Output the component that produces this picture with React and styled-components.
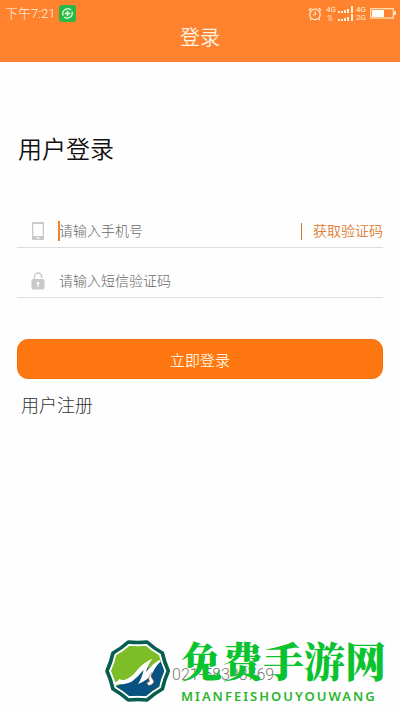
import React from "react";
import styled, { createGlobalStyle } from "styled-components";

const GlobalStyle = createGlobalStyle`
  *, *::before, *::after { box-sizing: border-box; }
  body {
    margin: 0;
    background: #fefefe;
    font-family: Roboto, "Noto Sans CJK SC", sans-serif;
  }
  button, input { font: inherit; }
`;

const Page = styled.div`
  min-height: 100vh;
  display: flex;
  flex-direction: column;
  background: #fefefe;
`;

const Header = styled.header`
  background: #ff822e;
  color: #fff4e4;
  height: 62px;
`;

const StatusBar = styled.div`
  height: 26px;
  padding: 1px 4px 0 5px;
  display: flex;
  align-items: center;
  justify-content: space-between;
`;

const StatusGroup = styled.div`
  display: flex;
  align-items: center;
  gap: ${(p) => p.$gap}px;
`;

const Clock = styled.span`
  font-size: 13px;
  line-height: 20px;
  font-weight: 300;
`;

const PageTitle = styled.h1`
  margin: 0;
  font-size: 20px;
  line-height: 24px;
  font-weight: 350;
  text-align: center;
`;

const LoginForm = styled.form`
  padding: 72px 17px 0;
`;

const Heading = styled.h2`
  margin: 0 0 48px;
  padding-left: 1px;
  font-size: 24px;
  line-height: 32px;
  font-weight: 350;
  color: #111;
`;

const Field = styled.div`
  height: ${(p) => p.$height}px;
  display: flex;
  align-items: flex-end;
  padding-bottom: 2px;
  border-bottom: 1px solid #dedede;
`;

const FieldIcon = styled.label`
  width: 42px;
  height: 28px;
  flex: none;
  display: flex;
  align-items: center;
  justify-content: center;
`;

const Caret = styled.span`
  width: 2px;
  height: 20px;
  margin: 0 -1px 4px;
  background: #ef8429;
`;

const TextInput = styled.input`
  flex: 1;
  min-width: 0;
  height: 28px;
  padding: 0;
  border: 0;
  outline: 0;
  background: transparent;
  color: #333;
  font-size: 14px;
  font-weight: 300;
  &::placeholder { color: #666; opacity: 1; }
`;

const CodeButton = styled.button`
  display: flex;
  align-items: center;
  gap: 11px;
  height: 28px;
  padding: 0;
  border: 0;
  background: none;
  color: #e17d31;
  font-size: 14px;
  line-height: 20px;
  font-weight: 350;
  &::before {
    content: "";
    width: 1px;
    height: 17px;
    background: #d96f2b;
  }
`;

const SubmitButton = styled.button`
  width: 100%;
  height: 40px;
  margin-top: 41px;
  padding: 0;
  border: 1px solid #f0700f;
  border-radius: 11px;
  background: #ff7711;
  color: #fff1df;
  font-size: 15px;
  font-weight: 350;
`;

const RegisterLink = styled.a`
  display: inline-block;
  margin: 14px 0 0 4px;
  font-size: 18px;
  line-height: 26px;
  font-weight: 300;
  color: #333;
  text-decoration: none;
`;

const Footer = styled.footer`
  position: relative;
  height: 72px;
  margin-top: auto;
  padding: 24px 0 0 149px;
`;

const Hotline = styled.a`
  display: flex;
  align-items: center;
  gap: 13px;
  font-size: 16px;
  line-height: 24px;
  font-weight: 300;
  color: #777;
  text-decoration: none;
`;

const Watermark = styled.div`
  position: absolute;
  right: 0;
  bottom: 0;
  width: 296px;
  height: 72px;
  display: flex;
  gap: 10px;
  pointer-events: none;
`;

const WatermarkText = styled.div`
  display: flex;
  flex-direction: column;
  gap: 7px;
  color: #0bc22f;
  white-space: nowrap;
`;

const BrandName = styled.span`
  font-family: "Noto Serif CJK SC", "Noto Sans CJK SC", serif;
  font-size: 41px;
  line-height: 42px;
  font-weight: 900;
`;

const BrandLatin = styled.span`
  font-family: "Noto Sans", sans-serif;
  font-size: 13px;
  line-height: 16px;
  font-weight: 600;
  letter-spacing: 2px;
  color: #2bb52f;
`;

function ChargeIcon() {
  return (
    <svg width="17" height="17" viewBox="0 0 17 17" aria-hidden="true">
      <rect width="17" height="17" rx="3" fill="#28b846" />
      <path d="M4.2 10.8A5 5 0 0 1 12 5M12.9 6.5A5 5 0 0 1 5 12" fill="none" stroke="#d9ffd4" strokeWidth="1.3" />
      <path d="M8.5 5.8v5.4M5.8 8.5h5.4" stroke="#f1ffe9" strokeWidth="1.5" />
    </svg>
  );
}

function AlarmIcon() {
  return (
    <svg width="14" height="14" viewBox="0 0 14 14" fill="none" stroke="#ffefd2" aria-hidden="true">
      <circle cx="7" cy="7.4" r="5.2" strokeWidth="1.2" />
      <path d="M7.3 4.6v3.2H4.9M.8 3.5 3.3 1M13.2 3.5 10.7 1M3.2 11.7l-1.1 1.4M10.8 11.7l1.1 1.4" strokeWidth="1.1" />
    </svg>
  );
}

const NetLabel = styled.span`
  font-size: 8px;
  line-height: 8px;
  color: #fff0d5;
`;

const NetColumn = styled.span`
  display: flex;
  flex-direction: column;
  width: 10px;
`;

function TrafficIcon() {
  return (
    <svg width="8" height="8" viewBox="0 0 8 8" fill="none" stroke="#ffd7a8" strokeWidth=".9" aria-hidden="true">
      <path d="M3 7V1L1.5 2.8M5 1v6l1.5-1.8" />
    </svg>
  );
}

function SignalIcon() {
  return (
    <svg width="16" height="16" viewBox="0 0 16 16" fill="#fff0d5" aria-hidden="true">
      <path d="M0 5h2v2H0zM3 5h2v2H3zM6 4h2v3H6zM9 3h2v4H9zM13 0h2v7h-2zM0 13h2v2H0zM3 13h2v2H3zM6 12h2v3H6zM9 11h2v4H9zM13 8h2v7h-2z" />
    </svg>
  );
}

function BatteryIcon() {
  return (
    <svg width="26" height="11" viewBox="0 0 26 11" aria-hidden="true">
      <rect x=".7" y=".7" width="22.6" height="9.3" fill="none" stroke="#ffe7bd" strokeWidth="1.2" />
      <path d="M2 2h12v7H2z" fill="#fffdf3" />
      <path d="M24 3h2v4h-2z" fill="#ffe7bd" />
    </svg>
  );
}

function PhoneIcon() {
  return (
    <svg width="12" height="18" viewBox="0 0 12 18" aria-hidden="true">
      <path
        fill="#c9c9c9"
        fillRule="evenodd"
        d="M1 0h10q1 0 1 1v16q0 1-1 1H1q-1 0-1-1V1Q0 0 1 0zM1.3 2v12h9.4V2zM4.5 15.3v1.2h3v-1.2z"
      />
    </svg>
  );
}

function LockIcon() {
  return (
    <svg width="14" height="18" viewBox="0 0 14 18" aria-hidden="true">
      <path d="M3.5 8V4.5a3.5 3.5 0 0 1 7 0V6" fill="none" stroke="#c9c9c9" strokeWidth="1.4" />
      <path
        fill="#c9c9c9"
        fillRule="evenodd"
        d="M2 7h10q1.5 0 1.5 1.5V16q0 1.5-1.5 1.5H2Q.5 17.5.5 16V8.5Q.5 7 2 7zm5 2.8a1.4 1.4 0 0 0-.7 2.6V15h1.4v-2.6A1.4 1.4 0 0 0 7 9.8z"
      />
    </svg>
  );
}

function HandsetIcon() {
  return (
    <svg width="10" height="14" viewBox="0 0 10 14" fill="none" stroke="#cf955c" strokeWidth="1.5" aria-hidden="true">
      <path d="M2 1q-1 9 7 12l1-3-3-1-1 1Q4 8 4 5l1-1-1-3z" />
    </svg>
  );
}

const badgeOutline =
  "M220 108Q208 134 202 162Q177 176 156 195Q128 192 100 195Q79 176 54 162Q48 134 36 108Q48 82 54 54Q79 40 100 21Q128 24 156 21Q177 40 202 54Q208 82 220 108Z";

const BadgeSvg = styled.svg`
  flex: none;
`;

function BrandLogo() {
  return (
    <BadgeSvg width="67" height="64" viewBox="27 12 201 192" aria-hidden="true">
      <defs>
        <clipPath id="badge-inner">
          <path d={badgeOutline} transform="translate(128 108) scale(.87) translate(-128 -108)" />
        </clipPath>
      </defs>
      <path d={badgeOutline} fill="#fff" stroke="#075d50" strokeWidth="11" strokeLinejoin="round" />
      <g clipPath="url(#badge-inner)">
        <path d="M20 10h220v200H20z" fill="#7dbd28" />
        <path d="M48 154Q92 152 118 122L160 98 205 70H240V210H48Z" fill="#085381" />
        <path
          d="M40 130L58 141Q70 140 73 131Q80 137 90 134Q110 128 126 106Q143 84 172 71Q157 91 153 112Q169 85 212 66Q183 89 174 111Q163 134 129 147Q140 131 146 104Q128 126 112 139Q94 150 76 147Q60 148 48 162Z"
          fill="#fff"
        />
        <path d="M170 112Q163 124 174 135Q180 145 164 151Q157 151 156 144L164 139Q157 129 170 112Z" fill="#fff" stroke="#c69564" strokeWidth="2" />
      </g>
    </BadgeSvg>
  );
}

export default function App() {
  return (
    <Page>
      <GlobalStyle />
      <Header>
        <StatusBar>
          <StatusGroup $gap={4}>
            <Clock>下午7:21</Clock>
            <ChargeIcon />
          </StatusGroup>
          <StatusGroup $gap={4}>
            <AlarmIcon />
            <StatusGroup $gap={2}>
              <NetColumn>
                <NetLabel>4G</NetLabel>
                <TrafficIcon />
              </NetColumn>
              <SignalIcon />
              <NetColumn>
                <NetLabel>4G</NetLabel>
                <NetLabel>2G</NetLabel>
              </NetColumn>
            </StatusGroup>
            <BatteryIcon />
          </StatusGroup>
        </StatusBar>
        <PageTitle>登录</PageTitle>
      </Header>

      <LoginForm onSubmit={(event) => event.preventDefault()}>
        <Heading>用户登录</Heading>
        <Field $height={34}>
          <FieldIcon htmlFor="phone" aria-label="手机号">
            <PhoneIcon />
          </FieldIcon>
          <Caret />
          <TextInput id="phone" type="tel" placeholder="请输入手机号" />
          <CodeButton type="button">获取验证码</CodeButton>
        </Field>
        <Field $height={50}>
          <FieldIcon htmlFor="code" aria-label="短信验证码">
            <LockIcon />
          </FieldIcon>
          <TextInput id="code" type="text" placeholder="请输入短信验证码" />
        </Field>
        <SubmitButton type="submit">立即登录</SubmitButton>
        <RegisterLink href="#register">用户注册</RegisterLink>
      </LoginForm>

      <Footer>
        <Hotline href="tel:02158393769">
          <HandsetIcon />
          021-58393769
        </Hotline>
        <Watermark>
          <BrandLogo />
          <WatermarkText>
            <BrandName>免费手游网</BrandName>
            <BrandLatin>MIANFEISHOUYOUWANG</BrandLatin>
          </WatermarkText>
        </Watermark>
      </Footer>
    </Page>
  );
}
